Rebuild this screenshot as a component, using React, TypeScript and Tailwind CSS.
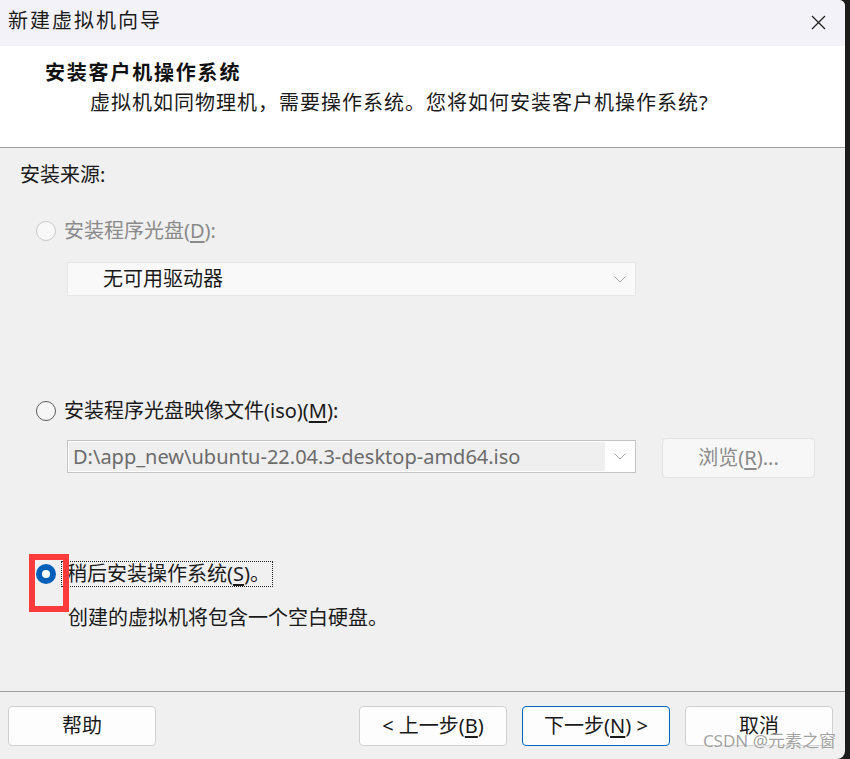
import React from 'react';

type RadioState = 'disabled' | 'off' | 'on';

const Radio: React.FC<{ state: RadioState }> = ({ state }) => {
  if (state === 'on') {
    return (
      <span className="w-[20px] h-[20px] rounded-full bg-[#005fb8] flex items-center justify-center shrink-0">
        <span className="w-[8px] h-[8px] rounded-full bg-white" />
      </span>
    );
  }
  return (
    <span
      className={`w-[20px] h-[20px] rounded-full border shrink-0 ${
        state === 'disabled' ? 'border-[#c8c8c8] bg-[#f8f8f8]' : 'border-[#5a5a5a] bg-[#f6f6f6]'
      }`}
    />
  );
};

const Chevron: React.FC = () => (
  <svg width="12" height="7" viewBox="0 0 12 7" fill="none">
    <path d="M0.5 0.5 L6 6 L11.5 0.5" stroke="#a6a6a6" strokeWidth="1" />
  </svg>
);

const Button: React.FC<{ children: React.ReactNode; primary?: boolean }> = ({ children, primary }) => (
  <button
    className={`w-[148px] h-[40px] rounded-[4px] bg-[#fdfdfd] text-[20px] text-[#1a1a1a] flex items-center justify-center ${
      primary ? 'border border-[#0067c0]' : 'border border-[#d0d0d0]'
    }`}
  >
    {children}
  </button>
);

const App: React.FC = () => {
  return (
    <div className="w-[850px] h-[759px] bg-[#1c1c1c] flex font-['Noto_Sans','Noto_Sans_CJK_SC',sans-serif]">
      <div className="relative w-[845px] h-full bg-[#f0f0f0] rounded-br-[8px] rounded-tr-[6px] overflow-hidden flex flex-col">
        {/* Title bar */}
        <div className="h-[46px] shrink-0 bg-[#f3f2f8] flex items-center justify-between pl-[8px] pr-[19px] pb-[4px]">
          <span className="text-[20px] tracking-[2px] text-[#1b1b1b]">新建虚拟机向导</span>
          <svg width="15" height="15" viewBox="0 0 15 15" fill="none" className="mt-[2px]">
            <path d="M1 1 L14 14 M14 1 L1 14" stroke="#1b1b1b" strokeWidth="1.2" />
          </svg>
        </div>

        {/* Header */}
        <div className="h-[102px] shrink-0 bg-white border-b border-[#a0a0a0] pt-[12px]">
          <div className="pl-[45px] text-[20px] leading-[30px] font-bold tracking-[1.8px] text-[#111]">
            安装客户机操作系统
          </div>
          <div className="pl-[90px] text-[20px] leading-[30px] tracking-[1px] text-[#1a1a1a]">
            虚拟机如同物理机，需要操作系统。您将如何安装客户机操作系统?
          </div>
        </div>

        {/* Content */}
        <div className="flex-1 pt-[13px] text-[20px] text-[#1a1a1a]">
          <div className="pl-[20px] leading-[28px]">安装来源:</div>

          <div className="mt-[28px] ml-[36px] flex items-center gap-[8px] h-[28px]">
            <Radio state="disabled" />
            <span className="text-[#8a8a8a]">
              安装程序光盘(<span className="underline underline-offset-[3px]">D</span>):
            </span>
          </div>

          <div className="mt-[17px] ml-[67px] w-[569px] h-[34px] bg-[#f9f9f9] border border-[#e6e6e6] flex items-center justify-between pl-[35px] pr-[9px]">
            <span>无可用驱动器</span>
            <Chevron />
          </div>

          <div className="mt-[101px] ml-[36px] flex items-center gap-[8px] h-[28px]">
            <Radio state="off" />
            <span>
              安装程序光盘映像文件(iso)(<span className="underline underline-offset-[3px]">M</span>):
            </span>
          </div>

          <div className="mt-[13px] ml-[67px] flex items-start gap-[26px] h-[40px]">
            <div className="mt-[2px] w-[569px] h-[33px] bg-white border border-[#c4c4c4] flex p-[1px]">
              <div className="w-[536px] bg-[#efefef] flex items-center pl-[4px] text-[#6b6b6b] whitespace-nowrap overflow-hidden">
                D:\app_new\ubuntu-22.04.3-desktop-amd64.iso
              </div>
              <div className="flex-1 flex items-center justify-end pr-[8px]">
                <Chevron />
              </div>
            </div>
            <div className="w-[153px] h-[40px] rounded-[4px] bg-[#f7f7f7] border border-[#e3e3e3] flex items-center justify-center text-[#8a8a8a]">
              浏览(<span className="underline underline-offset-[3px]">R</span>)...
            </div>
          </div>

          <div className="mt-[83px] ml-[36px] flex items-center gap-[5px] h-[26px]">
            <span className="border border-dotted border-[#222] h-[26px] leading-[24px] pl-[5px] pr-[2px] order-2">
              稍后安装操作系统(<span className="underline underline-offset-[3px]">S</span>)。
            </span>
            <div className="relative order-1">
              <Radio state="on" />
              <div className="absolute left-[-7px] top-[-10px] w-[40px] h-[58px] border-[6px] border-[#ff3b3b]" />
            </div>
          </div>

          <div className="mt-[17px] ml-[68px] leading-[28px]">创建的虚拟机将包含一个空白硬盘。</div>
        </div>

        {/* Footer */}
        <div className="h-[68px] shrink-0 border-t border-[#a0a0a0] pt-[14px] pl-[8px] pr-[12px] flex items-start justify-between">
          <Button>帮助</Button>
          <div className="flex gap-[15px]">
            <Button>
              &lt; 上一步(<span className="underline underline-offset-[3px]">B</span>)
            </Button>
            <Button primary>
              下一步(<span className="underline underline-offset-[3px]">N</span>) &gt;
            </Button>
            <Button>取消</Button>
          </div>
        </div>

        <div className="absolute right-[9px] bottom-[6px] text-[17px] text-[#8c8c8c]/80 [text-shadow:0_0_2px_#ffffff]">
          CSDN @元素之窗
        </div>
      </div>
    </div>
  );
};

export default App;
